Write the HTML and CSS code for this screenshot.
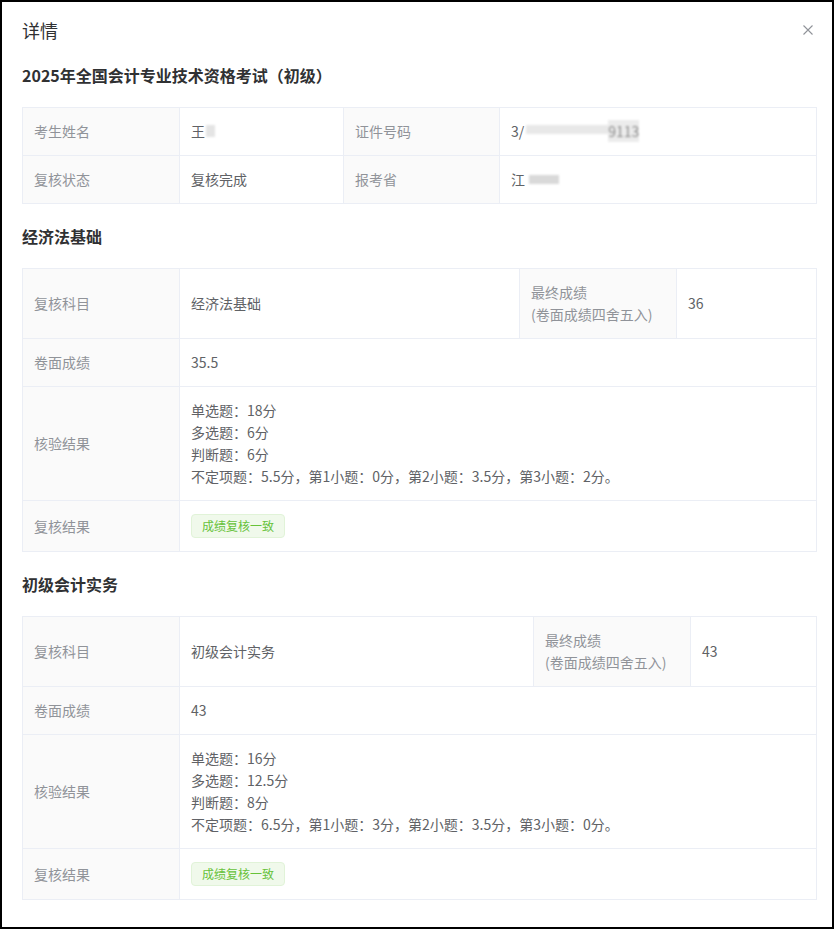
FILE: index.html
```html
<!DOCTYPE html>
<html lang="zh-CN">
<head>
    <meta charset="UTF-8">
    <meta name="viewport" content="width=device-width, initial-scale=1.0">
    <title>详情</title>
    <link rel="stylesheet" href="styles.css">
</head>
<body>

    <div class="dialog">
        <div class="dialog-header">
            <span class="dialog-title">详情</span>
            <button class="dialog-close" aria-label="关闭">
                <svg viewBox="0 0 12 12" width="12" height="12">
                    <path d="M1.5 1.5l9 9M10.5 1.5l-9 9" stroke="#909399" stroke-width="1.1" fill="none"/>
                </svg>
            </button>
        </div>

        <div class="dialog-body">
            <!-- Grunddaten -->
            <section class="desc">
                <div class="desc-title">2025年全国会计专业技术资格考试（初级）</div>
                <div class="desc-grid cols-info">
                    <div class="cell label">考生姓名</div>
                    <div class="cell">王<span class="mask mask-name"></span></div>
                    <div class="cell label">证件号码</div>
                    <div class="cell">3/<span class="mask mask-id"></span><span class="mask-text">9113</span></div>
                    <div class="cell label">复核状态</div>
                    <div class="cell">复核完成</div>
                    <div class="cell label">报考省</div>
                    <div class="cell">江<span class="mask mask-prov"></span></div>
                </div>
            </section>

            <!-- Fach 1 -->
            <section class="desc">
                <div class="desc-title">经济法基础</div>
                <div class="desc-grid cols-a">
                    <div class="cell label">复核科目</div>
                    <div class="cell">经济法基础</div>
                    <div class="cell label">最终成绩<br>(卷面成绩四舍五入)</div>
                    <div class="cell">36</div>
                    <div class="cell label">卷面成绩</div>
                    <div class="cell span-3">35.5</div>
                    <div class="cell label">核验结果</div>
                    <div class="cell span-3">
                        <div>
                            单选题：18分<br>
                            多选题：6分<br>
                            判断题：6分<br>
                            不定项题：5.5分，第1小题：0分，第2小题：3.5分，第3小题：2分。
                        </div>
                    </div>
                    <div class="cell label tag-row">复核结果</div>
                    <div class="cell span-3 tag-row"><span class="tag">成绩复核一致</span></div>
                </div>
            </section>

            <!-- Fach 2 -->
            <section class="desc">
                <div class="desc-title">初级会计实务</div>
                <div class="desc-grid cols-b">
                    <div class="cell label">复核科目</div>
                    <div class="cell">初级会计实务</div>
                    <div class="cell label">最终成绩<br>(卷面成绩四舍五入)</div>
                    <div class="cell">43</div>
                    <div class="cell label">卷面成绩</div>
                    <div class="cell span-3">43</div>
                    <div class="cell label">核验结果</div>
                    <div class="cell span-3">
                        <div>
                            单选题：16分<br>
                            多选题：12.5分<br>
                            判断题：8分<br>
                            不定项题：6.5分，第1小题：3分，第2小题：3.5分，第3小题：0分。
                        </div>
                    </div>
                    <div class="cell label tag-row">复核结果</div>
                    <div class="cell span-3 tag-row"><span class="tag">成绩复核一致</span></div>
                </div>
            </section>
        </div>
    </div>

</body>
</html>
```

FILE: styles.css
```css
/* Seite mit schwarzem Rahmen */
html, body {
    margin: 0;
    background-color: #000;
}

body {
    padding: 2px;
    font-family: "Noto Sans CJK SC", "Noto Sans", sans-serif;
    color: #606266;
}

/* Der Dialog */
.dialog {
    background-color: #fff;
    height: 925px;
    box-sizing: border-box;
    overflow: hidden;
}

.dialog-header {
    display: flex;
    justify-content: space-between;
    align-items: center;
    padding: 16px 18px 0 20px;
    height: 24px;
}

.dialog-title {
    font-size: 18px;
    line-height: 24px;
    color: #303133;
}

.dialog-close {
    border: none;
    background: none;
    padding: 0;
    width: 12px;
    height: 12px;
    cursor: pointer;
    display: flex;
}

.dialog-body {
    padding: 21px 15px 0 20px;
}

/* Beschreibungsblöcke */
.desc + .desc {
    margin-top: 20px;
}

.desc-title {
    font-size: 16px;
    font-weight: bold;
    line-height: 24px;
    color: #303133;
    margin-bottom: 20px;
}

.desc-grid {
    display: grid;
    border-top: 1px solid #ebeef5;
    border-left: 1px solid #ebeef5;
}

.cols-info {
    grid-template-columns: 157px 164px 156px 1fr;
}

.cols-a {
    grid-template-columns: 157px 340px 157px 1fr;
}

.cols-b {
    grid-template-columns: 157px 354px 157px 1fr;
}

.cell {
    display: flex;
    align-items: center;
    padding: 12px 11px 13px;
    font-size: 14px;
    line-height: 22px;
    border-right: 1px solid #ebeef5;
    border-bottom: 1px solid #ebeef5;
    color: #606266;
}

.cell.label {
    background-color: #fafafa;
    color: #909399;
}

.span-3 {
    grid-column: span 3;
}

.tag-row {
    padding-top: 13px;
    padding-bottom: 13px;
}

/* Grünes Tag */
.tag {
    display: inline-block;
    height: 24px;
    line-height: 22px;
    padding: 0 10px;
    box-sizing: border-box;
    font-size: 12px;
    color: #67c23a;
    background-color: #f0f9eb;
    border: 1px solid #e1f3d8;
    border-radius: 4px;
}

/* Verpixelte Angaben */
.mask {
    display: inline-block;
    height: 12px;
    background-color: #e4e4e4;
    filter: blur(1px);
}

.mask-name {
    width: 9px;
    margin-left: 1px;
}

.mask-id {
    width: 84px;
    height: 9px;
    margin: 0 0 4px 2px;
    background-color: #e8e8e8;
}

.mask-text {
    filter: blur(0.8px);
    background-color: #ececec;
    color: #8a8a8a;
    margin-left: -2px;
}

.mask-prov {
    width: 30px;
    height: 9px;
    margin-left: 4px;
    background-color: #d9d9d9;
}
```
